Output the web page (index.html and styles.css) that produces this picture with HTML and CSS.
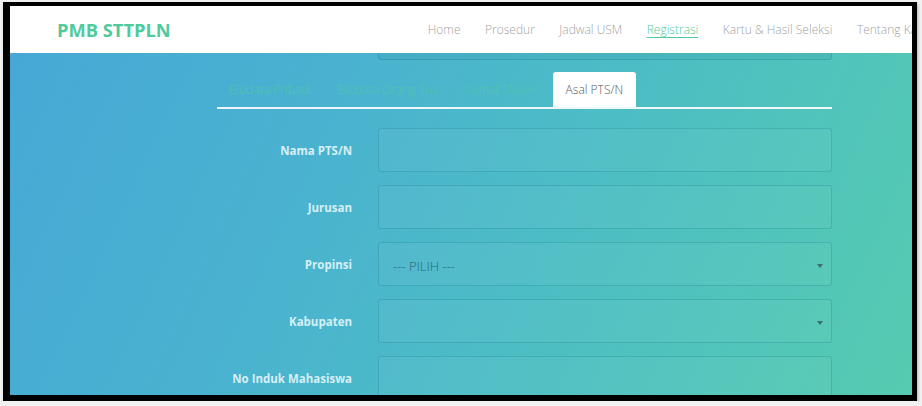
FILE: index.html
```html
<!DOCTYPE html>
<html lang="id">
<head>
    <meta charset="UTF-8">
    <meta name="viewport" content="width=device-width, initial-scale=1.0">
    <title>PMB STTPLN - Registrasi</title>
    <link rel="stylesheet" href="styles.css">
</head>
<body>
    <div class="frame">
        <header class="navbar">
            <a class="brand" href="#">PMB STTPLN</a>
            <nav class="menu">
                <a href="#">Home</a>
                <a href="#">Prosedur</a>
                <a href="#">Jadwal USM</a>
                <a href="#" class="active">Registrasi</a>
                <a href="#">Kartu &amp; Hasil Seleksi</a>
                <a href="#">Tentang Kami</a>
            </nav>
        </header>

        <main class="content">
            <div class="container">
                <div class="form-row peek">
                    <span></span>
                    <div class="field field-tail"></div>
                </div>

                <ul class="tabs">
                    <li><a href="#">Biodata Pribadi</a></li>
                    <li><a href="#">Biodata Orang Tua</a></li>
                    <li><a href="#">Tamat SMA/K</a></li>
                    <li class="active"><a href="#">Asal PTS/N</a></li>
                </ul>

                <form class="form">
                    <div class="form-row">
                        <label for="nama_pts">Nama PTS/N</label>
                        <input type="text" id="nama_pts" class="field">
                    </div>
                    <div class="form-row">
                        <label for="jurusan">Jurusan</label>
                        <input type="text" id="jurusan" class="field">
                    </div>
                    <div class="form-row">
                        <label for="propinsi">Propinsi</label>
                        <div class="field select">
                            <span class="placeholder">--- PILIH ---</span>
                            <span class="caret"></span>
                        </div>
                    </div>
                    <div class="form-row">
                        <label for="kabupaten">Kabupaten</label>
                        <div class="field select">
                            <span class="placeholder"></span>
                            <span class="caret"></span>
                        </div>
                    </div>
                    <div class="form-row">
                        <label for="nim">No Induk Mahasiswa</label>
                        <input type="text" id="nim" class="field">
                    </div>
                </form>
            </div>
        </main>
    </div>
</body>
</html>
```

FILE: styles.css
```css
body {
    margin: 0;
    background-color: #f1f1f1;
    font-family: "Open Sans", Arial, sans-serif;
}

.frame {
    width: 902px;
    height: 389px;
    margin: 2px 0 0 3px;
    border-style: solid;
    border-color: #000;
    border-width: 4px 5px 6px 7px;
    overflow: hidden;
    display: flex;
    flex-direction: column;
    box-shadow: 1px 2px 3px rgba(0, 0, 0, 0.25);
}

/* top bar */
.navbar {
    height: 47px;
    flex-shrink: 0;
    background-color: #fff;
    display: flex;
    align-items: center;
    white-space: nowrap;
    overflow: hidden;
    position: relative;
    z-index: 2;
}

.brand {
    margin-left: 47px;
    font-size: 18.3px;
    font-weight: 700;
    color: #4fca9c;
    text-decoration: none;
}

.menu {
    display: flex;
    gap: 24.5px;
    margin-left: 257px;
    font-size: 12px;
    font-weight: 300;
}

.menu a {
    color: #a3a3a3;
    text-decoration: none;
}

.menu a.active {
    color: #4fca9c;
    text-decoration: underline;
    text-underline-offset: 3px;
}

/* gradient body */
.content {
    flex: 1;
    background: linear-gradient(115deg, #47a8d6 0%, #4ab3cf 35%, #4dbfc2 65%, #56cbb0 100%);
    overflow: hidden;
}

.container {
    width: 615px;
    margin-left: 207px;
}

.form-row {
    display: grid;
    grid-template-columns: 135px 454px;
    column-gap: 26px;
    align-items: center;
    margin-bottom: 13px;
}

.form-row label {
    text-align: right;
    font-weight: 700;
    font-size: 11.5px;
    color: #d6eff6;
}

.field {
    box-sizing: border-box;
    height: 44px;
    width: 454px;
    border: 1px solid rgba(20, 110, 130, 0.25);
    border-radius: 3px;
    background-color: rgba(255, 255, 255, 0.04);
    outline: none;
    font-family: "Open Sans", Arial, sans-serif;
}

.peek {
    margin-bottom: 0;
}

.field-tail {
    height: 7px;
    border-top: none;
    border-radius: 0 0 3px 3px;
    background-color: rgba(20, 90, 120, 0.08);
}

.select {
    display: flex;
    align-items: center;
    justify-content: space-between;
    padding: 0 8px 0 14px;
}

.placeholder {
    font-size: 13px;
    font-weight: 300;
    color: #2a6675;
    padding-top: 4px;
}

.caret {
    width: 0;
    height: 0;
    border-left: 3px solid transparent;
    border-right: 3px solid transparent;
    border-top: 4px solid #3b6d78;
    margin-top: 3px;
}

/* tabs */
.tabs {
    list-style: none;
    margin: 12px 0 19px 0;
    padding: 0;
    display: flex;
    align-items: flex-end;
    height: 35px;
    border-bottom: 2px solid rgba(255, 255, 255, 0.9);
}

.tabs li a {
    display: block;
    padding: 0 12px;
    line-height: 35px;
    font-size: 12px;
    font-weight: 300;
    color: #50c6a8;
    text-decoration: none;
}

.tabs li {
    margin-right: 3px;
}

.tabs li.active a {
    background-color: #fff;
    color: #5a5a5a;
    border-radius: 3px 3px 0 0;
    padding: 0 13px;
}

.form {
    margin: 0;
}
```
